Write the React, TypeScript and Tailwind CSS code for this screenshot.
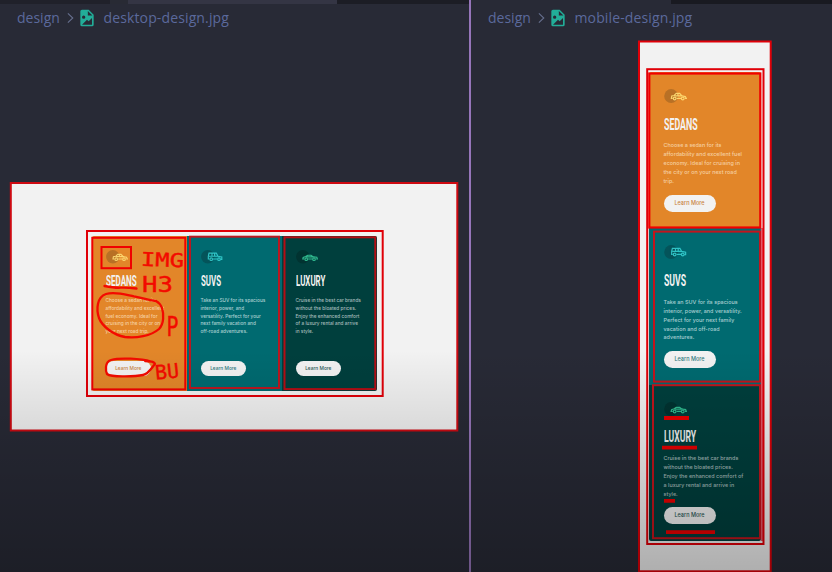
import React from "react";

type Car = "sedan" | "suv" | "luxury";

const CARS: Record<Car, string> = {
  sedan: "M8.300 9H7l.4-2.200 2.300-.5 2-2h3.300l2 2.200 3.500.8.9 1.700h-1.200M10 6.600h8M13.300 4.300v2.300M12 9h4.500",
  suv: "M8.300 9H7.300V6.200l.7-3h7.300l1.700 3 3.800.8V9.300h-1.300M8 6.200h9M11 3.200v3M13.600 3.200v3M12 9h4.500",
  luxury: "M8.300 9H6.800l.4-1.600 2.500-.9 2-1.300h3.300l2 1.500 3.800.6.6 1.700h-1.200M10 6.900h8.500M12 9h4.500",
};

function CarIcon({ car, color, circle, className }: { car: Car; color: string; circle: string; className: string }) {
  return (
    <svg viewBox="0 0 22 14" className={className} fill="none">
      <circle cx="6.800" cy="6.800" r="6.700" fill={circle} />
      <g stroke={color} strokeWidth="1.150" opacity="0.900">
        <path d={CARS[car]} />
        <circle cx="10.200" cy="9.200" r="1.300" />
        <circle cx="18" cy="9.200" r="1.300" />
      </g>
    </svg>
  );
}

interface CardData {
  car: Car;
  title: string;
  bg: string;
  ink: string;
  iconColor: string;
  circle: string;
  titleScale: string;
  textColor: string;
  wide: string[];
  tall: string[];
}

const CARDS: CardData[] = [
  {
    car: "sedan",
    title: "SEDANS",
    bg: "bg-[#e28629]",
    ink: "text-[#c98442]",
    iconColor: "#ffdf76",
    circle: "#b87025",
    titleScale: "scale-x-[.52]",
    textColor: "text-[#f6d0a2]",
    wide: ["Choose a sedan for its", "affordability and excellent", "fuel economy. Ideal for", "cruising in the city or on", "your next road trip."],
    tall: ["Choose a sedan for its", "affordability and excellent fuel", "economy. Ideal for cruising in", "the city or on your next road", "trip."],
  },
  {
    car: "suv",
    title: "SUVS",
    bg: "bg-[#006a70]",
    ink: "text-[#2f7a7e]",
    iconColor: "#35cfd0",
    circle: "#04545a",
    titleScale: "scale-x-[.51]",
    textColor: "text-[#a9d0d2]",
    wide: ["Take an SUV for its spacious", "interior, power, and", "versatility. Perfect for your", "next family vacation and", "off-road adventures."],
    tall: ["Take an SUV for its spacious", "interior, power, and versatility.", "Perfect for your next family", "vacation and off-road", "adventures."],
  },
  {
    car: "luxury",
    title: "LUXURY",
    bg: "bg-[#003f3d]",
    ink: "text-[#2a5856]",
    iconColor: "#36c99a",
    circle: "#013331",
    titleScale: "scale-x-[.51]",
    textColor: "text-[#a5bdbc]",
    wide: ["Cruise in the best car brands", "without the bloated prices.", "Enjoy the enhanced comfort", "of a luxury rental and arrive", "in style."],
    tall: ["Cruise in the best car brands", "without the bloated prices.", "Enjoy the enhanced comfort of", "a luxury rental and arrive in", "style."],
  },
];

function WideCard({ c }: { c: CardData }) {
  return (
    <div className={`flex w-[95px] flex-col items-start pl-[14px] pt-[14px] ${c.bg}`}>
      <CarIcon car={c.car} color={c.iconColor} circle={c.circle} className="h-[14px] w-[22px]" />
      <h3 className={`mt-[10px] h-[14px] origin-left whitespace-nowrap font-['Roboto',sans-serif] text-[15.5px] font-bold leading-[14px] text-[#f2f2f2] ${c.titleScale}`}>
        {c.title}
      </h3>
      <p className={`mt-[9px] whitespace-nowrap font-['Inter',sans-serif] text-[4.75px] font-medium leading-[7.8px] ${c.textColor}`}>
        {c.wide.map((l) => (
          <span key={l} className="block">{l}</span>
        ))}
      </p>
      <button className={`mt-[25.5px] h-[15px] w-[45.5px] rounded-full bg-[#f2f2f2] text-center font-['Inter',sans-serif] text-[4.8px] font-medium leading-[15px] ${c.ink}`}>
        Learn More
      </button>
    </div>
  );
}

function TallCard({ c }: { c: CardData }) {
  return (
    <div className={`flex h-[156.3px] flex-col items-start pl-[14.5px] pt-[17px] ${c.bg}`}>
      <CarIcon car={c.car} color={c.iconColor} circle={c.circle} className="h-[14.5px] w-[23px]" />
      <h3 className={`mt-[12.3px] h-[16px] origin-left whitespace-nowrap font-['Roboto',sans-serif] text-[17px] font-bold leading-[16px] text-[#f2f2f2] ${c.titleScale}`}>
        {c.title}
      </h3>
      <p className={`mt-[9.7px] whitespace-nowrap font-['Inter',sans-serif] text-[5.4px] font-medium leading-[8.9px] tracking-[0.02px] ${c.textColor}`}>
        {c.tall.map((l) => (
          <span key={l} className="block">{l}</span>
        ))}
      </p>
      <button className={`mt-[8.5px] h-[17px] w-[52px] rounded-full bg-[#f2f2f2] text-center font-['Inter',sans-serif] text-[5.5px] font-medium leading-[17px] ${c.ink}`}>
        Learn More
      </button>
    </div>
  );
}

function Breadcrumb({ file }: { file: string }) {
  return (
    <div className="flex h-[28px] items-center pl-[17px] font-['Open_Sans','Noto_Sans',sans-serif] text-[14px] leading-[28px] text-[#5b699c]">
      <span className="w-[43px] whitespace-nowrap">design</span>
      <svg viewBox="0 0 8 12" className="ml-[6.5px] h-[12px] w-[7px]" fill="none" stroke="#67708f" strokeWidth="1.2">
        <path d="M1 .8 6.6 6 1 11.2" />
      </svg>
      <svg viewBox="0 0 24 24" className="ml-[3.5px] h-[20px] w-[20px]" fill="#22ad98">
        <path d="M13 9h5.5L13 3.5V9M6 2h8l6 6v12a2 2 0 0 1-2 2H6a2 2 0 0 1-2-2V4c0-1.11.89-2 2-2m0 18h12v-8l-4 4-2-2-6 6M8 9a2 2 0 0 0-2 2 2 2 0 0 0 2 2 2 2 0 0 0 2-2 2 2 0 0 0-2-2Z" />
      </svg>
      <span className="ml-[6.5px] whitespace-nowrap tracking-[0.13px]">{file}</span>
    </div>
  );
}

function Annotations() {
  return (
    <svg className="absolute left-0 top-0 h-[572px] w-[832px]" viewBox="0 0 832 572" fill="none" stroke="#e00008" strokeWidth="2">
      <rect x="10.800" y="183" width="446.500" height="247.500" stroke="#ce0a12" />
      <rect x="87" y="231" width="295.700" height="165" />
      <rect x="92.300" y="237.800" width="93" height="151.600" stroke="#f00000" />
      <rect x="190" y="236.700" width="89" height="151.300" stroke="#ba1720" />
      <rect x="284.500" y="237.300" width="90.800" height="151.800" stroke="#b50d14" />
      <rect x="101.500" y="247" width="29.500" height="21.200" stroke="#f00000" />
      <rect x="639" y="41.500" width="131.700" height="529.800" />
      <path d="M762.300 228v313" stroke="#e6596a" strokeWidth="3" />
      <rect x="647.200" y="69.200" width="116.300" height="474.800" />
      <rect x="649.300" y="73.500" width="111" height="154" stroke="#f00000" strokeWidth="2.200" />
      <rect x="654" y="231.600" width="106" height="150" stroke="#c4141c" />
      <rect x="653" y="385.200" width="107" height="153" stroke="#c4141c" />
      <g strokeWidth="3.800" stroke="#ec0000">
        <path d="M664 418h25M662 447.700h35M664 500.800h11M666 532.200h49" />
      </g>
      <g strokeWidth="2.300" strokeLinecap="round" strokeLinejoin="round" stroke="#f30a00">
        <path d="M104.500 286q10 2 16 1.700t16 .8" />
        <path d="M156 301c-9-.5-12-3-22-4.700-9-1.800-19-5-28-2.300-9 3-10 15-7 24 3 8 14 17 26 19 11 1.500 26-1 34-8 5-5 5-15 3-21q-2-5-6-7" />
        <path d="M151 361.500c-10-3-31-4-40-1.500-7 2-5 12-4 14 5 4 31 2 36 1 6-1 9-8 12-11q-.5-3-10-3" />
      </g>
      <g fill="#f30a00" fontFamily="DejaVu Sans Mono, monospace" stroke="#f30a00" strokeWidth="0.400">
        <text x="141" y="266.500" fontSize="19" textLength="43" lengthAdjust="spacingAndGlyphs" transform="rotate(2 162 260)">IMG</text>
        <text x="142" y="292" fontSize="22" textLength="31" lengthAdjust="spacingAndGlyphs">H3</text>
        <text x="166.500" y="335.500" fontSize="27" textLength="12" lengthAdjust="spacingAndGlyphs">P</text>
        <text x="155" y="378.500" fontSize="20" textLength="24" lengthAdjust="spacingAndGlyphs" transform="rotate(-6 167 371)">BU</text>
      </g>
    </svg>
  );
}

export default function App() {
  return (
    <div className="relative flex h-[572px] w-[832px] overflow-hidden bg-[#282a36]">
      <section className="flex w-[469px] flex-col">
        <div className="flex h-[4px] bg-[#1c1d25]">
          <div className="w-[110px] bg-[#20212a]" />
          <div className="w-[18px] bg-[#282a34]" />
          <div className="w-[209px] bg-[#343544]" />
        </div>
        <Breadcrumb file="desktop-design.jpg" />
        <div className="ml-[10px] mt-[150.5px] flex h-[248.5px] w-[448px] bg-[#f2f2f2] pl-[81.5px] pt-[53.5px]">
          <div className="flex h-[155px] w-[285px] overflow-hidden rounded-[2px]">
            {CARDS.map((c) => (
              <WideCard key={c.title} c={c} />
            ))}
          </div>
        </div>
      </section>
      <div className="w-[2px] bg-[#9675ba]" />
      <section className="flex w-[361px] flex-col">
        <div className="flex h-[4px] justify-end">
          <div className="w-[161px] bg-[#191a21]" />
        </div>
        <Breadcrumb file="mobile-design.jpg" />
        <div className="ml-[168px] mt-[9px] h-[531px] w-[132px] bg-[#f2f2f2] pl-[10px] pt-[31px]">
          <div className="w-[112px] overflow-hidden rounded-[2px]">
            {CARDS.map((c) => (
              <TallCard key={c.title} c={c} />
            ))}
          </div>
        </div>
      </section>
      <Annotations />
      <div className="pointer-events-none absolute inset-x-0 bottom-0 h-[222px] bg-gradient-to-b from-black/0 to-black/28" />
    </div>
  );
}
